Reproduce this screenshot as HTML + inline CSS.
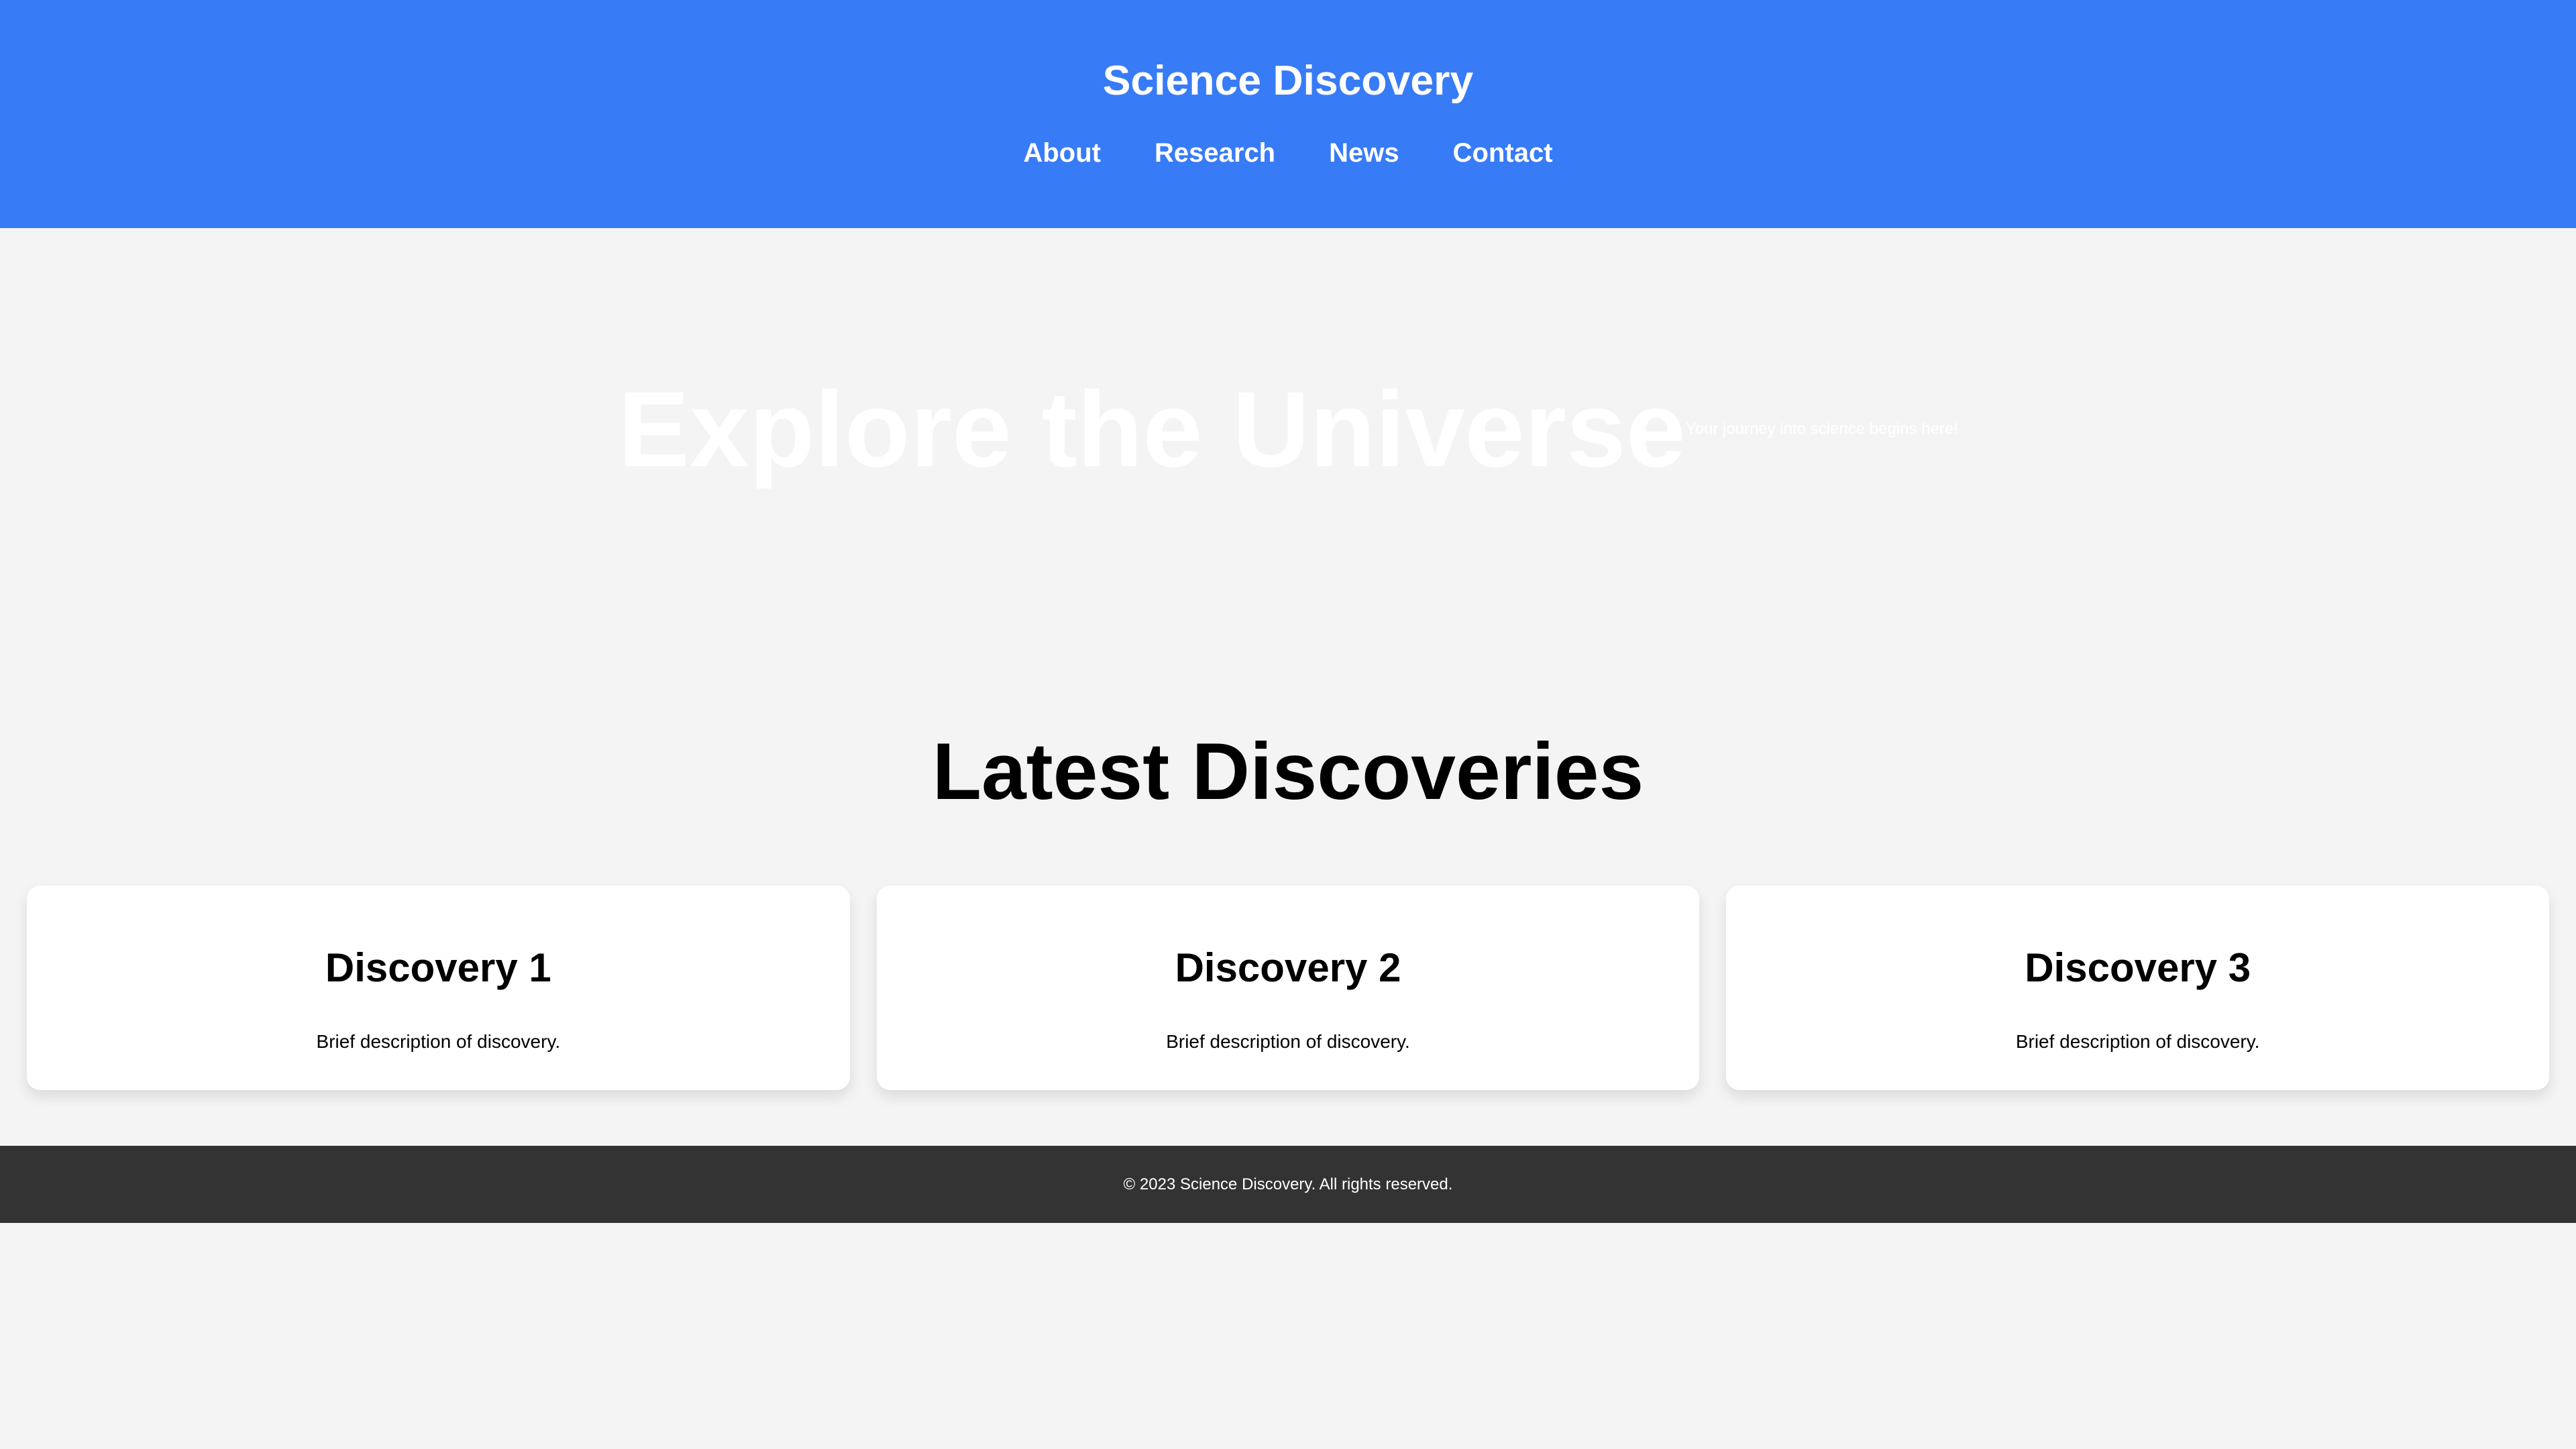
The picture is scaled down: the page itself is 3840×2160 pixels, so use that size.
<!DOCTYPE html>
<html><head><meta charset="utf-8"><style>
html,body{margin:0;padding:0}
body{zoom:2.5;width:1536px;height:864px;background:#f4f4f4;font-family:"Liberation Sans",Arial,sans-serif;position:relative;overflow:hidden}
.a{position:absolute;left:0;width:1536px;text-align:center;white-space:nowrap}
header{position:absolute;left:0;top:0;width:1536px;height:136px;background:#387bf7;color:#fff}
h1{margin:0;font-size:25px;line-height:28px;top:34px;font-weight:bold}
nav{top:82px;font-size:16px;font-weight:bold;line-height:19px}
nav span{margin:0 16px}
.hero{top:216px;height:80px;display:flex;justify-content:center;align-items:center;color:#fff}
.hero h2{margin:0;font-size:64px;line-height:80px;font-weight:bold}
.hero p{margin:0;font-size:9.6px}
.ld{top:432px;margin:0;font-size:48px;line-height:56px;font-weight:bold;color:#000}
.card{position:absolute;top:528px;width:490.67px;height:122px;background:#fff;border-radius:8px;box-shadow:0 4px 8px rgba(0,0,0,.1);text-align:center}
.card h3{position:absolute;left:0;right:0;margin:0;font-size:24px;line-height:28px;top:35px}
.card p{position:absolute;left:0;right:0;margin:0;top:86px;font-size:11.2px;line-height:14px}
footer{position:absolute;left:0;top:683px;width:1536px;height:46px;background:#333;color:#fff;text-align:center;font-size:9.6px;line-height:46px}
</style></head><body>
<header>
<h1 class="a">Science Discovery</h1>
<nav class="a"><span>About</span><span>Research</span><span>News</span><span>Contact</span></nav>
</header>
<div class="a hero"><h2>Explore the Universe</h2><p>Your journey into science begins here!</p></div>
<h2 class="a ld">Latest Discoveries</h2>
<div class="card" style="left:16px"><h3>Discovery 1</h3><p>Brief description of discovery.</p></div>
<div class="card" style="left:522.67px"><h3>Discovery 2</h3><p>Brief description of discovery.</p></div>
<div class="card" style="left:1029.33px"><h3>Discovery 3</h3><p>Brief description of discovery.</p></div>
<footer>© 2023 Science Discovery. All rights reserved.</footer>
</body></html>
